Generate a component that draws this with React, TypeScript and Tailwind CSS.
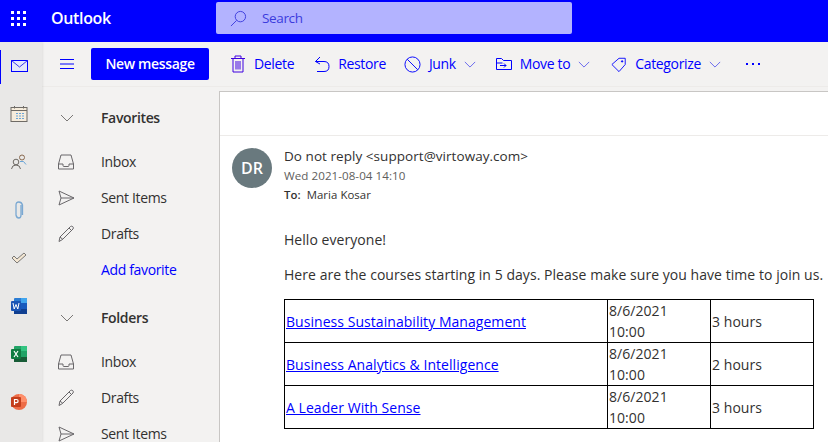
import { ReactNode } from "react";

const Svg = ({ size = 20, children, className = "" }: { size?: number; children: ReactNode; className?: string }) => (
    <svg width={size} height={size} viewBox="0 0 20 20" fill="none" stroke="currentColor" strokeWidth="1" className={className}>
        {children}
    </svg>
)

const Chevron = ({ className = "" }: { className?: string }) => (
    <svg viewBox="0 0 14 8" fill="none" stroke="currentColor" strokeWidth="1" className={className}>
        <path d="M1 1l6 6 6-6"/>
    </svg>
)

const InboxIcon = () => (
    <Svg>
        <path d="M5 3h10l2.500 9v5h-15v-5z M2.500 12h4.500v1.500q0 1 1 1h4q1 0 1-1v-1.500h4.500"/>
    </Svg>
)

const SentIcon = () => (
    <Svg>
        <path d="M3 3l15 7-15 7 2-7z M5 10h13"/>
    </Svg>
)

const DraftIcon = () => (
    <Svg>
        <path d="M3 17.500l1-4.500L14.500 2.500q1.200-.8 2.300.2t.2 2.300L6.500 15.500z M4 13l3 2.500 M13 4l3 3"/>
    </Svg>
)

const NavRow = ({ icon, label }: { icon?: ReactNode; label: string }) => (
    <div className="flex items-center h-9 shrink-0">
        <div className="w-[59px] pl-[14px] text-[#69676a]">{icon}</div>
        <span className={icon ? "text-[#323130]" : "text-[#0000ff]"}>{label}</span>
    </div>
)

const NavHeader = ({ label }: { label: string }) => (
    <div className="flex items-center h-9 shrink-0 mb-2">
        <div className="w-[59px] pl-[18px] text-[#7a7876]"><Chevron className="w-[14px] h-[8px]"/></div>
        <span className="font-semibold text-[#323130]">{label}</span>
    </div>
)

const ToolButton = ({ icon, label, caret, className = "" }: { icon: ReactNode; label: string; caret?: boolean; className?: string }) => (
    <div className={`flex items-center text-[#0000ff] ${className}`}>
        {icon}
        <span className="ml-[8px]">{label}</span>
        {caret && <Chevron className="ml-[8px] w-[12px] h-[7px] text-[#5555ee]"/>}
    </div>
)

const railIcons: ReactNode[] = [
    <svg key="mail" width="17" height="13" viewBox="0 0 17 13" fill="none" stroke="#0000ff" strokeWidth="1">
        <rect x=".5" y=".5" width="16" height="11" fill="#e3e8fb"/>
        <path d="M.5 .5l8 6.500 8-6.500" stroke="#3a3aee"/>
    </svg>,
    <svg key="cal" width="18" height="16" viewBox="0 0 18 16" fill="none" stroke="#6f6b66" strokeWidth="1">
        <rect x="1" y="1.500" width="16" height="14" fill="#f6ecdc"/>
        <path d="M1 4.500h16M4.500 0v2.500M13.500 0v2.500"/>
        <path d="M6 7.500h9M6 10h9M6 12.500h9" stroke="#6aa5d8" strokeDasharray="2 1"/>
    </svg>,
    <svg key="people" width="16" height="16" viewBox="0 0 16 16" fill="none" strokeWidth="1">
        <circle cx="5" cy="8" r="2.800" stroke="#6f6b66"/>
        <path d="M.500 15q.5-4 4.500-4t4.500 4" stroke="#6f6b66"/>
        <circle cx="11" cy="3.500" r="2.500" stroke="#8a6a50"/>
        <path d="M9 7.500q4-1.500 6 3" stroke="#6aa5d8"/>
    </svg>,
    <svg key="clip" width="10" height="18" viewBox="0 0 10 18" fill="none" stroke="#7aa8d2" strokeWidth="1.300">
        <path d="M7 4v10q0 3-2.200 3T2 14V4q0-3 2.800-3T8.500 4v10"/>
    </svg>,
    <svg key="todo" width="16" height="14" viewBox="0 0 16 14" fill="none" strokeWidth="1">
        <path d="M1 7l5 5 9-8-2-2-7 6-3-3z" stroke="#7a7876" fill="#f3e6d2"/>
    </svg>,
    <svg key="word" width="16" height="16" viewBox="0 0 16 16">
        <rect x="3" width="13" height="16" rx="1" fill="#2b7cd3"/>
        <rect x="3" y="5" width="13" height="6" fill="#185abd"/>
        <rect x="3" y="11" width="13" height="5" fill="#103f91"/>
        <rect x="10" width="6" height="5" fill="#41a5ee"/>
        <rect y="3" width="10" height="10" rx="1" fill="#1a55b5"/>
        <path d="M2 5l1.200 6L5 6.500 6.800 11 8 5" fill="none" stroke="#fff" strokeWidth="1"/>
    </svg>,
    <svg key="excel" width="16" height="16" viewBox="0 0 16 16">
        <rect x="3" width="13" height="16" rx="1" fill="#21a366"/>
        <rect x="10" width="6" height="5" fill="#33c481"/>
        <rect x="3" y="5" width="7" height="6" fill="#107c41"/>
        <rect x="3" y="11" width="13" height="5" fill="#185c37"/>
        <rect y="3" width="10" height="10" rx="1" fill="#107c41"/>
        <path d="M3 5l4 6M7 5l-4 6" fill="none" stroke="#fff" strokeWidth="1.200"/>
    </svg>,
    <svg key="ppt" width="16" height="16" viewBox="0 0 16 16">
        <circle cx="8" cy="8" r="8" fill="#ed6c47"/>
        <path d="M8 0a8 8 0 0 1 8 8H8z" fill="#ff8f6b"/>
        <rect y="3" width="10" height="10" rx="1" fill="#c43e1c"/>
        <path d="M3.500 11V5.500H5.500a1.500 1.500 0 0 1 0 3.200H3.500" fill="none" stroke="#fff" strokeWidth="1.200"/>
    </svg>,
]

const courses = [
    { name: "Business Sustainability Management", hours: "3 hours" },
    { name: "Business Analytics & Intelligence", hours: "2 hours" },
    { name: "A Leader With Sense", hours: "3 hours" },
]

export default function App() {
    return (
        <div className="w-[828px] h-[442px] overflow-hidden flex flex-col bg-white text-[14px] leading-5 font-['Open_Sans',sans-serif] text-[#323130] tracking-[-0.35px]">
            <header className="h-[42px] shrink-0 bg-[#0000ff] flex items-center text-white pb-[6px]">
                <div className="w-[38px] pl-[11px]">
                    <svg width="15" height="15" viewBox="0 0 15 15" fill="#fff">
                        {[1.5, 7.5, 13.5].flatMap(y => [1.5, 7.5, 13.5].map(x => <rect key={`${x}-${y}`} x={x - 1.5} y={y - 1.5} width="3" height="3"/>))}
                    </svg>
                </div>
                <span className="ml-[13px] w-[165px] text-[16px] font-semibold">Outlook</span>
                <div className="w-[356px] h-[32px] rounded-[2px] bg-[#b3b3ff] flex items-center text-[#3b3bdd] pl-[14px]">
                    <svg width="17" height="17" viewBox="0 0 18 18" fill="none" stroke="currentColor" strokeWidth="1">
                        <circle cx="11" cy="7" r="5.500"/>
                        <path d="M7 11l-6 6"/>
                    </svg>
                    <span className="ml-[15px] text-[13.5px]">Search</span>
                </div>
            </header>
            <div className="flex flex-1 min-h-0">
                <aside className="w-[42px] shrink-0 bg-[#e9e8e7] shadow-[1px_0_2px_rgba(0,0,0,0.08)] z-10 relative flex flex-col">
                    {railIcons.map((icon, i) => (
                        <div key={i} className="h-12 shrink-0 flex items-center justify-center pr-1">{icon}</div>
                    ))}
                    <div className="absolute left-0 top-[8px] w-px h-[34px] bg-[#0000ff]"/>
                </aside>
                <div className="flex-1 min-w-0 flex flex-col bg-[#f3f2f1]">
                    <div className="h-[45px] shrink-0 flex items-center border-b border-[#edebe9]">
                        <div className="w-[49px] pl-[18px] text-[#0000ff]">
                            <svg width="14" height="10" viewBox="0 0 14 10" stroke="currentColor" strokeWidth="1"><path d="M0 .5h14M0 5h14M0 9.500h14"/></svg>
                        </div>
                        <button className="w-[118px] h-[32px] bg-[#0000ff] text-white font-semibold rounded-[2px]">New message</button>
                        <div className="flex items-center ml-[21px]">
                            <ToolButton label="Delete" icon={
                                <svg width="16" height="18" viewBox="0 0 16 18" fill="none" stroke="#3f00e0" strokeWidth="1"><path d="M1 3.500h14M5 3.500V1h6v2.500M3 3.500V17h10V3.500M6 6v8.500M8 6v8.500M10 6v8.500"/></svg>
                            }/>
                            <ToolButton className="ml-[20px]" label="Restore" icon={
                                <svg width="16" height="18" viewBox="0 0 16 18" fill="none" stroke="currentColor" strokeWidth="1"><path d="M6 2L1.500 6.500 6 9M1.500 6.500H10q5 0 5 5t-5 5H3"/></svg>
                            }/>
                            <ToolButton className="ml-[18px]" label="Junk" caret icon={
                                <svg width="17" height="17" viewBox="0 0 18 18" fill="none" stroke="currentColor" strokeWidth="1"><circle cx="9" cy="9" r="8"/><path d="M3.500 3.500l11 11"/></svg>
                            }/>
                            <ToolButton className="ml-[20px]" label="Move to" caret icon={
                                <svg width="16" height="14" viewBox="0 0 16 14" fill="none" stroke="currentColor" strokeWidth="1"><path d="M.500 11V1.500h5l2 2h8v9h-15zM.500 6h6M4 8.500h6M8 6.500l2 2-2 2"/></svg>
                            }/>
                            <ToolButton className="ml-[21px]" label="Categorize" caret icon={
                                <svg width="16" height="17" viewBox="0 0 18 18" fill="none" stroke="currentColor" strokeWidth="1"><path d="M1 9l8-7h7v7l-7 8z"/><circle cx="12.500" cy="5.500" r=".8" fill="currentColor"/></svg>
                            }/>
                            <div className="ml-[25px] flex gap-[4px]">
                                {[0, 1, 2].map(i => <span key={i} className="w-[2px] h-[2px] bg-[#0000ff]"/>)}
                            </div>
                        </div>
                    </div>
                    <div className="flex flex-1 min-h-0">
                        <nav className="w-[177px] shrink-0 pt-[13px] flex flex-col overflow-hidden">
                            <NavHeader label="Favorites"/>
                            <NavRow icon={<InboxIcon/>} label="Inbox"/>
                            <NavRow icon={<SentIcon/>} label="Sent Items"/>
                            <NavRow icon={<DraftIcon/>} label="Drafts"/>
                            <NavRow label="Add favorite"/>
                            <div className="h-3 shrink-0"/>
                            <NavHeader label="Folders"/>
                            <NavRow icon={<InboxIcon/>} label="Inbox"/>
                            <NavRow icon={<DraftIcon/>} label="Drafts"/>
                            <NavRow icon={<SentIcon/>} label="Sent Items"/>
                        </nav>
                        <main className="flex-1 min-w-0 mt-[4px] bg-white border-t border-l border-[#c8c6c4] overflow-hidden tracking-[0.05px]">
                            <div className="h-[44px] border-b border-[#edebe9]"/>
                            <div className="flex pl-[12px] pt-[12px]">
                                <div className="w-10 h-10 shrink-0 rounded-full bg-[#69797e] text-white text-[16px] font-semibold flex items-center justify-center">DR</div>
                                <div className="ml-[12px]">
                                    <div className="text-[13.5px] leading-[20px] -mt-[2px] whitespace-nowrap">Do not reply &lt;support@virtoway.com&gt;</div>
                                    <div className="text-[11.6px] leading-[18px] text-[#605e5c] mt-[1px]">Wed 2021-08-04 14:10</div>
                                    <div className="text-[11.4px] leading-[18px] mt-[1px]"><span className="font-semibold">To:</span>&nbsp; Maria Kosar</div>
                                </div>
                            </div>
                            <div className="pl-[64px] pt-[26px]">
                                <p className="whitespace-nowrap">Hello everyone!</p>
                                <p className="whitespace-nowrap mt-[15px]">Here are the courses starting in 5 days. Please make sure you have time to join us.</p>
                                <table className="mt-[14px] w-[529px] border-collapse border border-black table-fixed">
                                    <colgroup>
                                        <col className="w-[323px]"/>
                                        <col className="w-[103px]"/>
                                        <col className="w-[103px]"/>
                                    </colgroup>
                                    <tbody>
                                        {courses.map(c => (
                                            <tr key={c.name} className="h-[43px]">
                                                <td className="border border-black px-px pt-px"><a href="#" className="text-[#0000ff] underline whitespace-nowrap">{c.name}</a></td>
                                                <td className="border border-black px-px leading-[21px]">8/6/2021<br/>10:00</td>
                                                <td className="border border-black px-px pt-px">{c.hours}</td>
                                            </tr>
                                        ))}
                                    </tbody>
                                </table>
                            </div>
                        </main>
                    </div>
                </div>
            </div>
        </div>
    )
}
